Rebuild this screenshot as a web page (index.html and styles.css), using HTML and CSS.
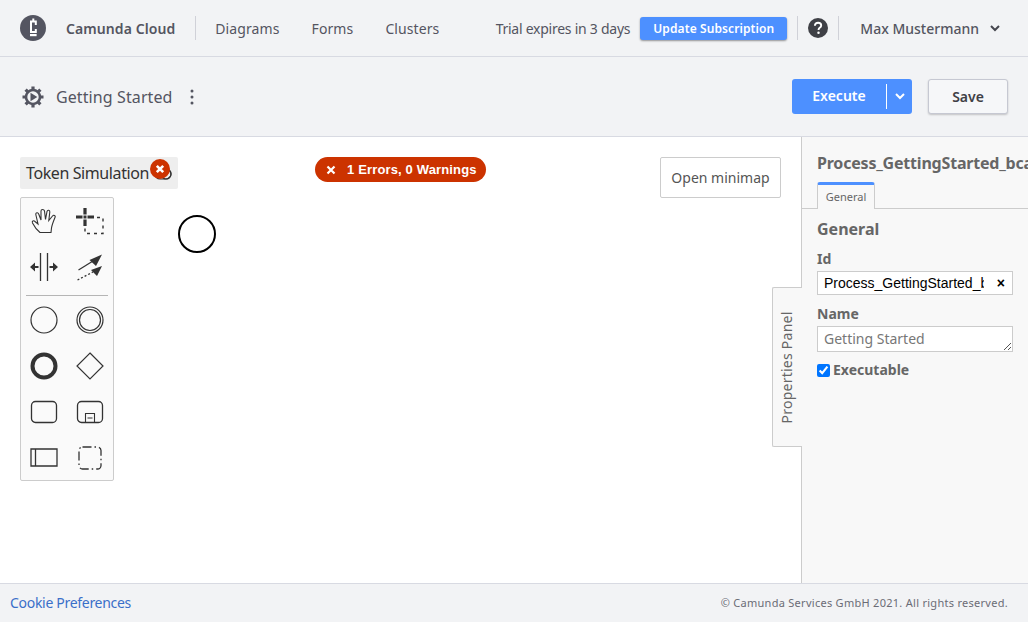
FILE: index.html
```html
<!DOCTYPE html>
<html lang="en">
<head>
<meta charset="UTF-8" />
<title>Getting Started - Camunda Cloud</title>
<link rel="stylesheet" href="styles.css">
</head>
<body>

<header class="top-bar">
  <svg class="logo" viewBox="0 0 26 26" width="26" height="26">
    <circle cx="13" cy="13" r="13" fill="#545561"/>
    <path d="M15.800 10V6.500H11v10.500h4.800v-3" fill="none" stroke="#fff" stroke-width="2"/>
    <path d="M13.300 3.500v3" stroke="#fff" stroke-width="2"/>
    <rect x="10" y="19" width="6.600" height="2.200" fill="#fff"/>
  </svg>
  <span class="brand">Camunda Cloud</span>
  <span class="divider"></span>
  <nav class="main-nav">
    <a>Diagrams</a>
    <a>Forms</a>
    <a>Clusters</a>
  </nav>
  <div class="top-right">
    <span class="trial">Trial expires in 3 days</span>
    <button class="update-btn">Update Subscription</button>
    <span class="divider"></span>
    <svg class="help" viewBox="0 0 20 20" width="20" height="20">
      <circle cx="10" cy="10" r="10" fill="#3f4046"/>
      <path d="M6.900 7.700c0-1.900 1.300-3 3.200-3 1.800 0 3.100 1.100 3.100 2.700 0 1.200-.6 1.800-1.500 2.400-.8.600-1.100.9-1.100 1.800v.4" fill="none" stroke="#fff" stroke-width="1.900"/>
      <circle cx="10.500" cy="14.700" r="1.250" fill="#fff"/>
    </svg>
    <span class="divider"></span>
    <span class="user">Max Mustermann</span>
    <svg class="chev" viewBox="0 0 10 7" width="10" height="7"><path d="M1 1l4 4 4-4" fill="none" stroke="#45464e" stroke-width="2"/></svg>
  </div>
</header>

<section class="sub-bar">
  <svg class="gear" viewBox="0 0 22 22" width="22" height="22">
    <circle cx="11" cy="11" r="7" fill="none" stroke="#545561" stroke-width="2.600"/>
    <path d="M11 .5v4M11 17.500v4M.5 11h4M17.500 11h4M3.600 3.600l2.800 2.800M15.600 15.600l2.800 2.800M3.600 18.400l2.800-2.800M15.600 6.400l2.800-2.800" stroke="#545561" stroke-width="3.200"/>
    <path d="M8.500 6.800v8.400l6.800-4.200z" fill="#545561"/>
  </svg>
  <span class="diagram-name">Getting Started</span>
  <svg class="dots" viewBox="0 0 4 16" width="4" height="16"><circle cx="2" cy="2" r="1.500"/><circle cx="2" cy="8" r="1.500"/><circle cx="2" cy="14" r="1.500"/></svg>
  <div class="sub-actions">
    <div class="execute">
      <span class="execute-label">Execute</span>
      <span class="execute-more">
        <svg viewBox="0 0 10 7" width="10" height="7"><path d="M1 1l4 4 4-4" fill="none" stroke="#fff" stroke-width="2"/></svg>
      </span>
    </div>
    <button class="save-btn">Save</button>
  </div>
</section>

<main class="workspace">
  <div class="canvas">
    <div class="token-sim">Token Simulation
      <svg class="toggle" viewBox="0 0 18 12" width="18" height="12"><rect x="1" y="1" width="16" height="10" rx="5" fill="none" stroke="#333" stroke-width="1.200"/><circle cx="12" cy="6" r="5" fill="none" stroke="#333" stroke-width="1.200"/></svg>
      <span class="err-dot"><svg viewBox="0 0 20 20" width="20" height="20"><circle cx="10" cy="10" r="10" fill="#cc3300"/><path d="M6.800 6.800l6.400 6.400M13.200 6.800l-6.400 6.400" stroke="#fff" stroke-width="2.600"/></svg></span>
    </div>

    <div class="palette">
      <div class="palette-group">
        <svg viewBox="0 0 28 28"><path d="M10 24.500C7 22 4 18 2.500 15c-.8-1.700 1-3 2.500-1.500L8 16 5.800 6.500C5.500 4.500 8 4 8.700 6L11 12V3c0-2 3-2 3.500 0l1 8.500L17 3.500c.5-2 3-1.500 2.800.5l-1 8.500L22.500 8c1-1.500 3.500-.5 2.500 1.500-1.500 3.500-3 7.500-3.500 10.500l-.5 4.500z" fill="none" stroke="#333" stroke-width="1.100"/></svg>
        <svg viewBox="0 0 28 28"><path d="M9 0v6.500M9 11.500V18M0 9h6.500M11.500 9H18" stroke="#333" stroke-width="3.200" fill="none"/><rect x="7.500" y="7.500" width="3" height="3" fill="#333"/><path d="M21 9.500h6v16H9v-5.500" stroke="#333" stroke-width="1.400" stroke-dasharray="3 4" fill="none"/></svg>
        <svg viewBox="0 0 28 28"><path d="M10.500 0v28M17.500 0v28" stroke="#333" stroke-width="1.300"/><path d="M0 14l5-4.500v9zM5 13h3.500v2H5zM28 14l-5-4.500v9zM19.500 13H23v2h-3.500z" fill="#333"/></svg>
        <svg viewBox="0 0 28 28"><path d="M2.500 17L17 8" stroke="#333" stroke-width="1.300"/><path d="M26 1.500L13.500 7l6.500 6zM26 13l-11 4 6 6z" fill="#333"/><path d="M1.500 27L17 19" stroke="#333" stroke-width="1.300" stroke-dasharray="2 2"/></svg>
      </div>
      <div class="palette-group">
        <svg viewBox="0 0 28 28"><circle cx="14" cy="14" r="13" fill="none" stroke="#333" stroke-width="1.200"/></svg>
        <svg viewBox="0 0 28 28"><circle cx="14" cy="14" r="13" fill="none" stroke="#333" stroke-width="1.200"/><circle cx="14" cy="14" r="10.500" fill="none" stroke="#333" stroke-width="1.200"/></svg>
        <svg viewBox="0 0 28 28"><circle cx="14" cy="14" r="11.500" fill="none" stroke="#333" stroke-width="4"/></svg>
        <svg viewBox="0 0 28 28"><path d="M14 1l13 13-13 13L1 14z" fill="none" stroke="#333" stroke-width="1.200"/></svg>
        <svg viewBox="0 0 28 28"><rect x="1.500" y="3.500" width="25" height="21" rx="4" fill="none" stroke="#333" stroke-width="1.300"/></svg>
        <svg viewBox="0 0 28 28"><rect x="1.500" y="3.500" width="25" height="21" rx="4" fill="none" stroke="#333" stroke-width="1.300"/><path d="M9.500 24.500v-9h9v9M11.500 20h5" fill="none" stroke="#333" stroke-width="1.100"/></svg>
        <svg viewBox="0 0 28 28"><path d="M1 5h26v17H1zM5.500 5v17" fill="none" stroke="#333" stroke-width="1.300"/></svg>
        <svg viewBox="0 0 28 28"><rect x="3" y="3" width="22" height="22" rx="3.500" fill="none" stroke="#333" stroke-width="1.300" stroke-dasharray="9 3 1.500 3"/></svg>
      </div>
    </div>

    <svg class="start-event" viewBox="0 0 38 38" width="38" height="38"><circle cx="19" cy="19" r="18" fill="#fff" stroke="#000" stroke-width="2"/></svg>

    <div class="error-badge">
      <svg viewBox="0 0 10 10" width="10" height="10"><path d="M1.500 1.500l7 7M8.500 1.500l-7 7" stroke="#fff" stroke-width="2.200"/></svg>
      <span>1 Errors, 0 Warnings</span>
    </div>

    <button class="minimap-btn">Open minimap</button>
    <div class="panel-tab"><span>Properties Panel</span></div>
  </div>

  <aside class="props">
    <div class="props-title">Process_GettingStarted_bca</div>
    <div class="props-tabs"><span class="props-tab">General</span></div>
    <div class="props-body">
      <h3>General</h3>
      <label class="field-label">Id</label>
      <div class="id-input"><span class="id-value">Process_GettingStarted_b</span><span class="id-clear">×</span></div>
      <label class="field-label">Name</label>
      <div class="name-input">Getting Started
        <svg class="grip" viewBox="0 0 9 9" width="9" height="9"><path d="M1 8l7-7M5 8l3-3" stroke="#555" stroke-width="1"/></svg>
      </div>
      <div class="exec-row"><input type="checkbox" checked><span>Executable</span></div>
    </div>
  </aside>
</main>

<footer class="footer">
  <a>Cookie Preferences</a>
  <span class="copyright">© Camunda Services GmbH 2021. All rights reserved.</span>
</footer>

</body>
</html>
```

FILE: styles.css
```css
* {
  margin: 0; padding: 0; box-sizing: border-box;
}
html, body {
  height: 100%;
  overflow: hidden;
}
body {
  display: flex;
  flex-direction: column;
  font-family: 'Noto Sans', sans-serif;
  color: #545561;
  background: #f2f3f5;
}
button {
  font-family: inherit;
  cursor: pointer;
}

/* top bar */
.top-bar {
  height: 57px;
  flex-shrink: 0;
  display: flex;
  align-items: center;
  padding: 0 20px;
  border-bottom: 1px solid #d8dae2;
}
.logo { flex-shrink: 0; }
.brand {
  margin-left: 20px;
  font-size: 14px;
  font-weight: 600;
  letter-spacing: 0.08px;
}
.divider {
  width: 1px;
  height: 24px;
  background: #d0d1d8;
  flex-shrink: 0;
}
.brand + .divider { margin-left: 20px; }
.main-nav {
  display: flex;
  gap: 32px;
  margin-left: 19px;
  font-size: 14px;
  letter-spacing: 0.1px;
}
.top-right {
  margin-left: auto;
  display: flex;
  align-items: center;
  font-size: 14px;
}
.trial {
  font-size: 14px;
  letter-spacing: -0.25px;
}
.update-btn {
  margin-left: 10px;
  width: 147px;
  height: 23px;
  border: 0;
  border-radius: 3px;
  background: #4d90ff;
  color: #fff;
  font-size: 12px;
  font-weight: 600;
  letter-spacing: 0.1px;
  box-shadow: 0 1px 2px rgba(0,0,0,0.4);
}
.update-btn + .divider { margin-left: 10px; margin-right: 10px; }
.help + .divider { margin-left: 10px; margin-right: 21px; }
.user { font-weight: 500; }
.chev { margin-left: 11px; margin-right: 8px; }

/* second bar */
.sub-bar {
  height: 80px;
  flex-shrink: 0;
  display: flex;
  align-items: center;
  padding: 0 20px 0 22px;
  border-bottom: 1px solid #d8dae2;
}
.diagram-name {
  margin-left: 12px;
  font-size: 16px;
  letter-spacing: 0.1px;
}
.dots { margin-left: 17px; fill: #545561; }
.sub-actions {
  margin-left: auto;
  display: flex;
  gap: 16px;
}
.execute {
  width: 120px;
  height: 35px;
  display: flex;
  align-items: center;
  border-radius: 3px;
  background: #4d90ff;
  color: #fff;
  font-size: 14px;
  font-weight: 600;
}
.execute-label {
  width: 95px;
  height: 25px;
  line-height: 24px;
  text-align: center;
  border-right: 1px solid #fff;
}
.execute-more {
  flex: 1;
  display: flex;
  justify-content: center;
}
.save-btn {
  width: 80px;
  height: 35px;
  border: 1px solid #c6c8d2;
  border-radius: 3px;
  background: #f6f7f9;
  color: #3f4046;
  font-size: 14px;
  font-weight: 600;
  box-shadow: 0 1px 2px rgba(0,0,0,0.2);
}

/* canvas and things on top of it */
.workspace {
  flex: 1;
  display: flex;
  min-height: 0;
}
.canvas {
  flex: 1;
  position: relative;
  background: #fff;
}
.token-sim {
  position: absolute;
  left: 20px; top: 20px;
  width: 158px;
  height: 32px;
  padding-left: 6px;
  line-height: 32px;
  font-size: 16px;
  letter-spacing: -0.4px;
  color: #333;
  background: #eee;
  border-radius: 2px;
  white-space: nowrap;
}
.toggle { position: absolute; left: 134px; top: 11px; }
.err-dot { position: absolute; left: 130px; top: 0; height: 20px; }
.palette {
  position: absolute;
  left: 20px; top: 60px;
  width: 94px;
  height: 284px;
  background: #fafafa;
  border: 1px solid #ccc;
  border-radius: 2px;
}
.palette-group {
  display: grid;
  grid-template-columns: repeat(2, 46px);
  grid-auto-rows: 46px;
  justify-items: center;
  align-items: center;
}
.palette-group:first-child {
  position: relative;
  padding-bottom: 6px;
  margin-bottom: 1px;
}
.palette-group:first-child::after {
  content: "";
  position: absolute;
  left: 5px; right: 5px; bottom: 0;
  height: 1px;
  background: #b5b5b5;
}
.palette svg { width: 28px; height: 28px; }
.palette-group:first-child svg:nth-child(-n+2) { margin-top: 2px; }
.start-event {
  position: absolute;
  left: 178px; top: 78px;
}
.error-badge {
  position: absolute;
  left: 315px; top: 20px;
  width: 171px;
  height: 25px;
  display: flex;
  align-items: center;
  gap: 11px;
  padding-left: 11px;
  border-radius: 13px;
  background: #cc3300;
  color: #fff;
  font-family: 'Liberation Sans', sans-serif;
  font-size: 13px;
  font-weight: 700;
  letter-spacing: 0.15px;
}
.minimap-btn {
  position: absolute;
  left: 660px; top: 20px;
  width: 121px;
  height: 41px;
  border: 1px solid #ccc;
  border-radius: 2px;
  background: #fff;
  color: #555;
  font-size: 14px;
}
.panel-tab {
  position: absolute;
  right: -1px; top: 150px;
  width: 30px;
  height: 160px;
  display: flex;
  align-items: center;
  justify-content: center;
  padding-right: 3px;
  background: #f8f8f8;
  border: 1px solid #ccc;
  border-right: 0;
  border-radius: 2px 0 0 2px;
  z-index: 2;
}
.panel-tab span {
  transform: rotate(-90deg);
  white-space: nowrap;
  font-size: 14px;
  letter-spacing: 0.25px;
  color: #666;
}

/* properties */
.props {
  width: 227px;
  flex-shrink: 0;
  background: #f8f8f8;
  border-left: 1px solid #ccc;
  overflow: hidden;
  color: #666;
}
.props-title {
  padding: 14px 0 0 15px;
  height: 45px;
  font-size: 16px;
  font-weight: 700;
  line-height: 24px;
  letter-spacing: -0.2px;
  white-space: nowrap;
  overflow: hidden;
}
.props-tabs {
  height: 27px;
  padding-left: 15px;
  border-bottom: 1px solid #ccc;
}
.props-tab {
  display: block;
  width: 58px;
  height: 27px;
  text-align: center;
  line-height: 24px;
  font-size: 11px;
  background: #f8f8f8;
  border: 1px solid #ccc;
  border-top: 3px solid #4d90ff;
  border-bottom: 0;
  border-radius: 3px 3px 0 0;
}
.props-body { padding: 8px 15px 0; }
.props-body h3 {
  font-size: 16px;
  font-weight: 700;
  line-height: 24px;
}
.field-label {
  display: block;
  margin-top: 9px;
  font-size: 14px;
  font-weight: 700;
  line-height: 20px;
}
.props-body h3 + .field-label { margin-top: 8px; }
.id-input {
  position: relative;
  width: 196px;
  height: 24px;
  margin-top: 2px;
  padding-left: 6px;
  background: #fff;
  border: 1px solid #ccc;
  color: #000;
  font-family: 'Liberation Sans', sans-serif;
  font-size: 14px;
  line-height: 22px;
}
.id-value {
  display: block;
  width: 160px;
  overflow: hidden;
  white-space: nowrap;
}
.id-clear {
  position: absolute;
  right: 7px; top: 0;
  font-weight: 700;
}
.name-input {
  position: relative;
  width: 196px;
  height: 26px;
  margin-top: 2px;
  padding-left: 6px;
  background: #fff;
  border: 1px solid #ccc;
  font-size: 14px;
  line-height: 24px;
  color: #777;
}
.grip { position: absolute; right: 0; bottom: 0; }
.exec-row {
  display: flex;
  align-items: center;
  gap: 3px;
  margin-top: 8px;
  font-size: 14px;
  font-weight: 700;
  line-height: 20px;
}
.exec-row input {
  width: 13px;
  height: 13px;
  accent-color: #0075ff;
}

/* footer */
.footer {
  height: 39px;
  flex-shrink: 0;
  display: flex;
  align-items: center;
  justify-content: space-between;
  padding: 0 20px 2px 10px;
  border-top: 1px solid #d8dae2;
  font-size: 14px;
}
.footer a { color: #3a6fc9; letter-spacing: -0.3px; }
.copyright { font-size: 11px; letter-spacing: 0.28px; color: #6b6c75; }
```
